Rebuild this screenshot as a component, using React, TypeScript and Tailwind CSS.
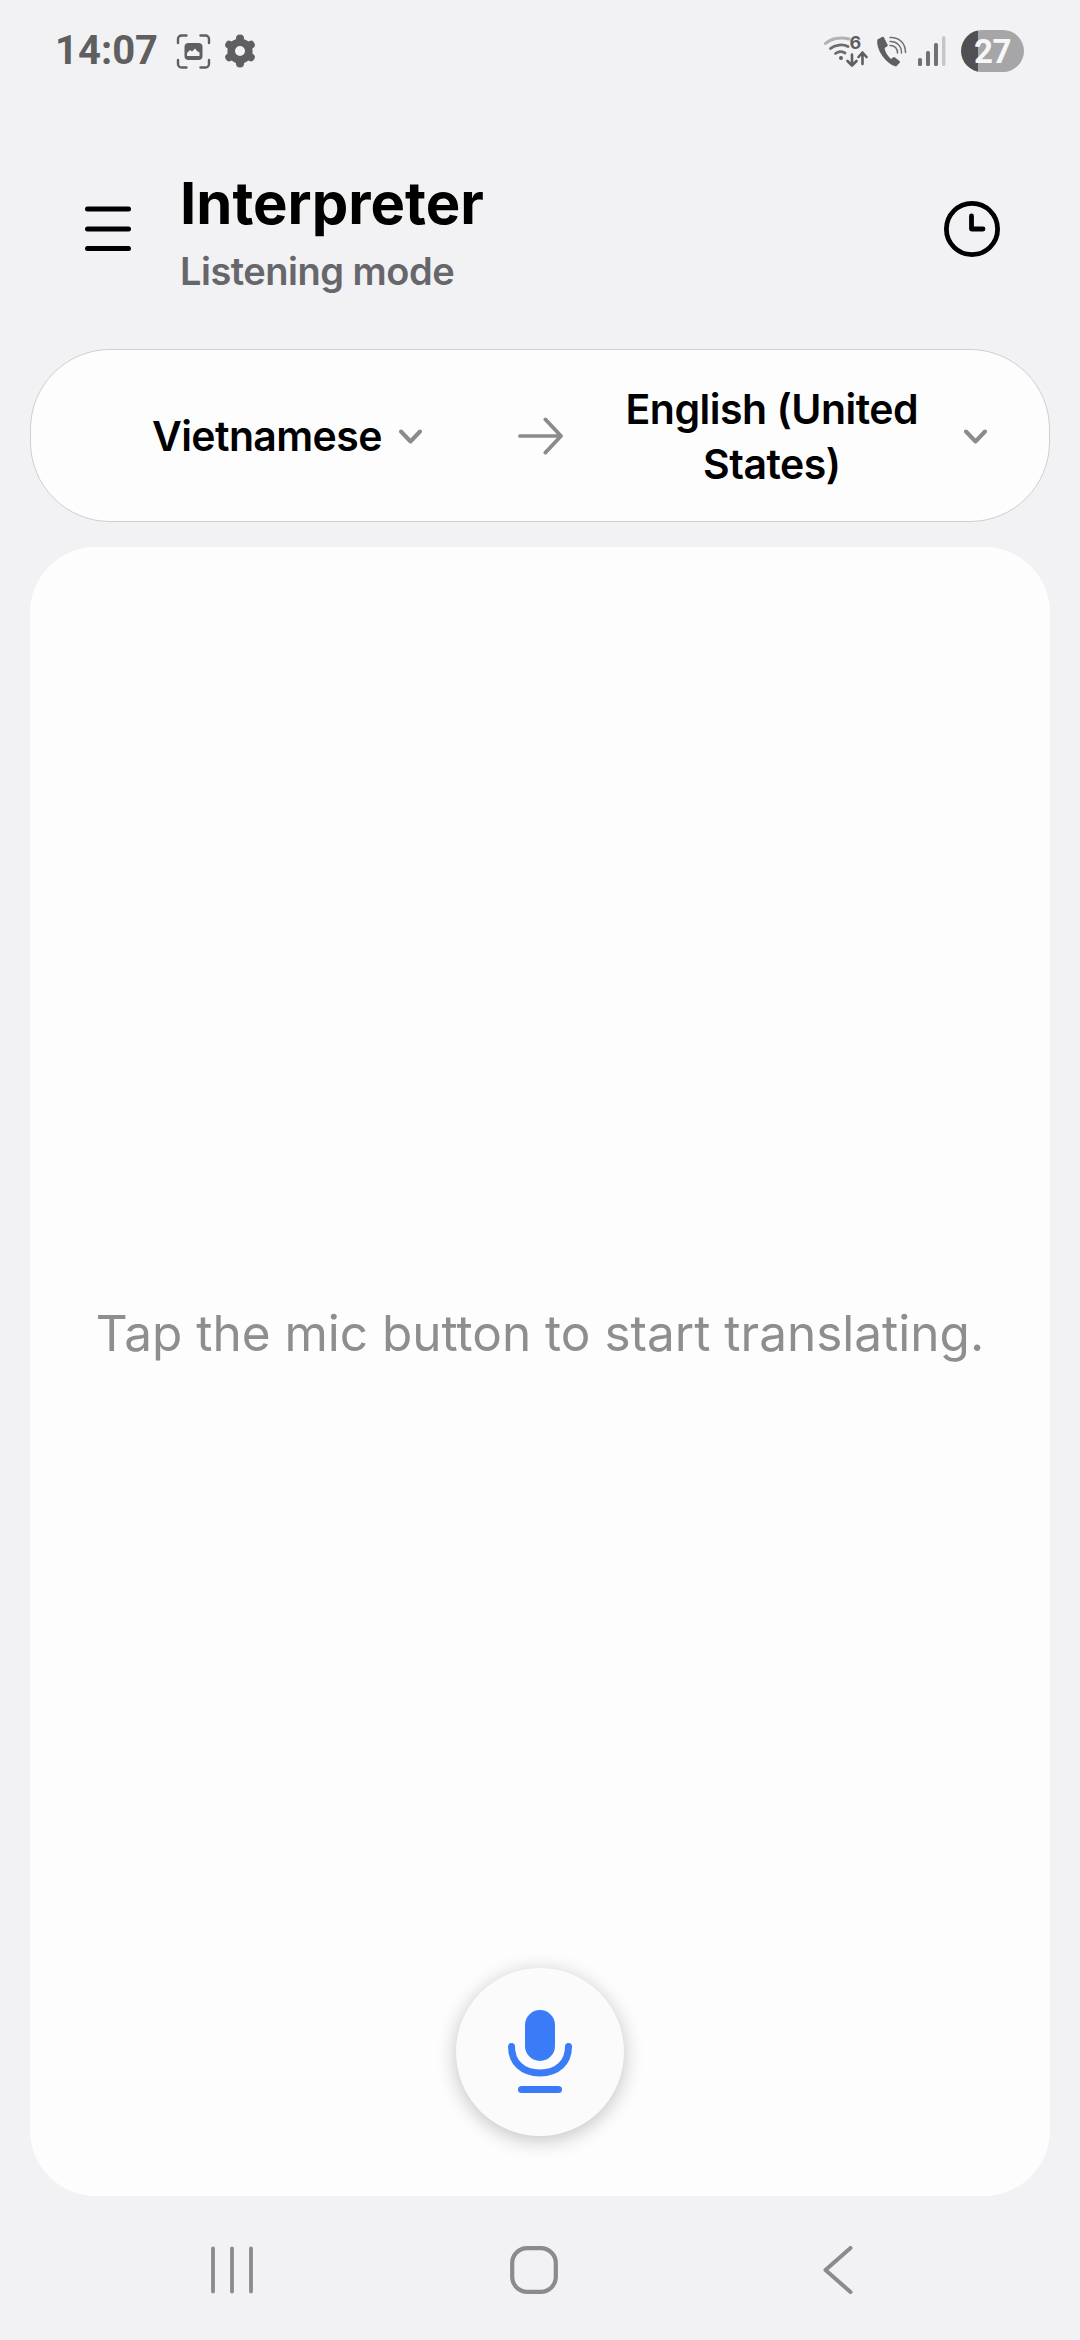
import React from 'react';

const sans = 'font-["Inter","Noto_Sans",sans-serif]';

const Chevron = () => (
  <svg width="23" height="15" viewBox="0 0 23 15" fill="none" className="mt-[2px] shrink-0">
    <path d="M2 2.500 11.500 12.500 21 2.500" stroke="#8b8b8d" strokeWidth="4" strokeLinecap="round" strokeLinejoin="round" />
  </svg>
);

const StatusBar = () => (
  <div className="flex h-[102px] items-center justify-between pl-[55px] pr-[56px]">
    <div className="flex items-center">
      <span className="font-['Roboto',sans-serif] text-[40px] font-bold leading-none text-[#5f5f61]">14:07</span>
      {/* screenshot indicator */}
      <svg width="35" height="35" viewBox="0 0 34 35" fill="none" className="ml-[18px]">
        <path d="M1.500 9V5a3.500 3.500 0 0 1 3.500-3.500h5M24 1.500h5A3.500 3.500 0 0 1 32.500 5v4M32.500 26v4a3.500 3.500 0 0 1-3.500 3.500h-5M10 33.500H5A3.500 3.500 0 0 1 1.500 30v-4" stroke="#5f5f61" strokeWidth="2.400" strokeLinecap="round" />
        <rect x="8" y="9" width="18" height="17" rx="4" fill="#5f5f61" />
        <path d="M10.500 22v-3l3-3 2 1.500 3-3 2 2.500 2.500 1.500V22z" fill="#f2f2f4" />
      </svg>
      {/* settings gear */}
      <svg width="32" height="34" viewBox="0 0 32 34" fill="none" className="ml-[13px]">
        <circle cx="16" cy="17" r="8.800" stroke="#5f5f61" strokeWidth="7.600" />
        <g stroke="#5f5f61" strokeWidth="8" strokeLinecap="round">
          <path d="M16 4.500V6" />
          <path d="M16 28V29.500" />
          <path d="M5.200 10.800 6.500 11.500" />
          <path d="M25.500 22.500 26.800 23.200" />
          <path d="M26.800 10.800 25.500 11.500" />
          <path d="M6.500 22.500 5.200 23.200" />
        </g>
      </svg>
    </div>
    <div className="flex items-center">
      {/* wifi 6 with data arrows */}
      <svg width="44" height="38" viewBox="0 -4 44 38" fill="none" className="-mt-[4px]">
        <path d="M1.500 9.500C7 4.500 16 2.500 25 5" stroke="#b2b2b4" strokeWidth="3" strokeLinecap="round" />
        <path d="M6.500 14.500C11 10.500 19 10 24 12.500" stroke="#6c6c6e" strokeWidth="2.800" strokeLinecap="round" />
        <path d="M11.500 19.500C14 17.500 18 17 21 19" stroke="#6c6c6e" strokeWidth="2.800" strokeLinecap="round" />
        <circle cx="17" cy="24" r="2" fill="#5f5f61" />
        <text x="25.500" y="15" fontFamily="Inter, sans-serif" fontSize="18" fontWeight="700" fill="#5f5f61">6</text>
        <path d="M28 20.500V31M23.500 27 28 31.500 32.500 27" stroke="#5f5f61" strokeWidth="2.600" strokeLinecap="round" strokeLinejoin="round" />
        <path d="M38.500 30V19M34.500 23 38.500 18.500 42.500 23" stroke="#5f5f61" strokeWidth="2.600" strokeLinecap="round" strokeLinejoin="round" />
      </svg>
      {/* wifi call */}
      <svg width="31" height="31" viewBox="0 0 31 31" fill="none" className="ml-[8px]">
        <path d="M6 1 1.500 3.500C-.500 11 8 27 20 30.500l3.500-3.500a1.500 1.500 0 0 0 0-2l-4.500-3.500a1.500 1.500 0 0 0-2 0l-2 1.500C11.500 20 9 15.500 8.500 12l2.500-1.500a1.500 1.500 0 0 0 .500-2L8 1.500A1.500 1.500 0 0 0 6 1z" fill="#5f5f61" />
        <path d="M14 1.500C23 1 29.500 7 29.500 16.500" stroke="#717173" strokeWidth="1.500" strokeLinecap="round" />
        <path d="M14 5.500C20.500 5 25.800 10 25.500 17" stroke="#717173" strokeWidth="1.500" strokeLinecap="round" />
        <path d="M14 9.500C18 9 22 12.500 21.500 17" stroke="#717173" strokeWidth="1.500" strokeLinecap="round" />
      </svg>
      {/* signal */}
      <svg width="28" height="30" viewBox="0 0 28 30" fill="none" className="ml-[11px]">
        <rect x="0" y="22" width="4" height="8" rx="1.500" fill="#717173" />
        <rect x="8" y="15" width="4" height="15" rx="1.500" fill="#717173" />
        <rect x="16" y="7" width="4" height="23" rx="1.500" fill="#717173" />
        <rect x="24" y="0" width="3.400" height="30" rx="1.500" fill="#c6c6c8" />
      </svg>
      <div className="ml-[15px] flex h-[42px] w-[63px] items-center justify-center rounded-full bg-[linear-gradient(90deg,#505052_27%,#a6a6a8_27%)]">
        <span className="font-['Roboto',sans-serif] text-[33px] font-bold leading-none tracking-[-0.5px] text-[#f7f7f8]">27</span>
      </div>
    </div>
  </div>
);

const Header = () => (
  <div className="flex h-[247px] items-start pl-[85px] pr-[80px] pt-[66px]">
    <svg width="46" height="46" viewBox="0 0 46 46" fill="none" className="mt-[38px] shrink-0">
      <g stroke="#000" strokeWidth="5" strokeLinecap="round">
        <path d="M2.500 3H43.500" />
        <path d="M2.500 23H43.500" />
        <path d="M2.500 42.500H43.500" />
      </g>
    </svg>
    <div className="ml-[49px]">
      <div className={`${sans} text-[58px] font-bold leading-[70px] text-black`}>Interpreter</div>
      <div className={`${sans} mt-[9px] text-[38px] font-semibold leading-[48px] tracking-[-0.5px] text-[#67676b]`}>Listening mode</div>
    </div>
    <svg width="56" height="56" viewBox="0 0 56 56" fill="none" className="ml-auto mt-[33px] shrink-0">
      <circle cx="28" cy="28" r="25.600" stroke="#000" strokeWidth="4.800" />
      <path d="M27.500 15V28H39" stroke="#000" strokeWidth="4.800" strokeLinecap="round" strokeLinejoin="round" />
    </svg>
  </div>
);

const LanguageBar = () => (
  <div className="mx-[30px] flex h-[173px] items-center rounded-[80px] border border-[#cfcfd1] bg-[#fdfdfe] pl-[121px]">
    <span className={`${sans} text-[41px] font-semibold leading-[56px] tracking-[-0.6px] text-black`}>Vietnamese</span>
    <div className="ml-[17px]"><Chevron /></div>
    <svg width="45" height="38" viewBox="0 0 46 38" fill="none" className="ml-[96px] shrink-0">
      <path d="M2 19H43M28 2 44 19 28 36" stroke="#8b8b8d" strokeWidth="3.800" strokeLinecap="round" strokeLinejoin="round" />
    </svg>
    <div className={`${sans} ml-[37px] mt-[2px] w-[344px] text-center text-[41px] font-semibold leading-[55px] tracking-[-0.5px] text-black`}>
      English (United States)
    </div>
    <div className="ml-[20px]"><Chevron /></div>
  </div>
);

const MicButton = () => (
  <div className="flex h-[168px] w-[168px] items-center justify-center rounded-full bg-[#fbfbfc] shadow-[0_4px_20px_rgba(0,0,0,0.24)]">
    <svg width="64" height="84" viewBox="0 0 64 84" fill="none">
      <rect x="17" y="0" width="30" height="51" rx="15" fill="#3a7bf8" />
      <path d="M3.500 36.500C3.500 52 14 63 32 63S60.500 52 60.500 36.500" stroke="#3a7bf8" strokeWidth="7" strokeLinecap="round" />
      <rect x="10" y="76" width="44" height="7" rx="3.500" fill="#3a7bf8" />
    </svg>
  </div>
);

const NavBar = () => (
  <div className="flex flex-1 items-start pl-[211px] pt-[50px]">
    <svg width="42" height="48" viewBox="0 0 42 48" fill="none" className="shrink-0">
      <g stroke="#8b8b8d" strokeWidth="3.800" strokeLinecap="round">
        <path d="M2 2.500V45.500" />
        <path d="M21 2.500V45.500" />
        <path d="M40 2.500V45.500" />
      </g>
    </svg>
    <svg width="48" height="48" viewBox="0 0 48 48" fill="none" className="ml-[257px] shrink-0">
      <rect x="2.200" y="2.200" width="43.600" height="43.600" rx="15" stroke="#8b8b8d" strokeWidth="4.200" />
    </svg>
    <svg width="30" height="48" viewBox="0 0 30 48" fill="none" className="ml-[265px] shrink-0">
      <path d="M27.500 2 2.500 24 27.500 46" stroke="#8b8b8d" strokeWidth="4" strokeLinecap="round" strokeLinejoin="round" />
    </svg>
  </div>
);

export default function App() {
  return (
    <div className="flex h-[2340px] w-[1080px] flex-col overflow-hidden bg-[#f2f2f4]">
      <StatusBar />
      <Header />
      <LanguageBar />
      <div className="mx-[30px] mt-[25px] flex h-[1649px] flex-col items-center rounded-[66px] bg-[#fdfdfe] pb-[60px] pt-[150px]">
        <div className="flex flex-1 items-center justify-center">
          <span className={`${sans} text-[49.500px] font-normal leading-[64px] text-[#8e8e90]`}>Tap the mic button to start translating.</span>
        </div>
        <MicButton />
      </div>
      <NavBar />
    </div>
  );
}
